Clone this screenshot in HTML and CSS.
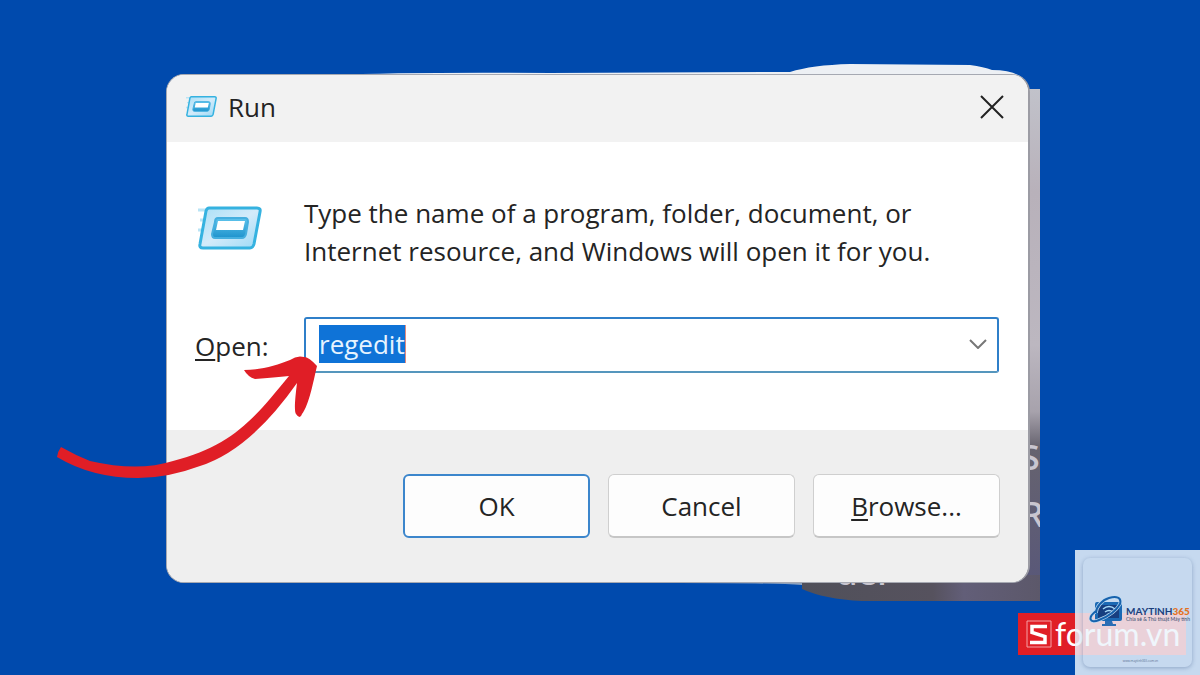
FILE: index.html
```html
<!DOCTYPE html>
<html lang="en">
<head>
<meta charset="utf-8">
<meta name="viewport" content="width=device-width, initial-scale=1">
<title>Run</title>
<link rel="stylesheet" href="styles.css">
</head>
<body>
<main class="desktop">
  <svg class="backdrop" viewBox="0 0 1200 675" aria-hidden="true">
    <defs>
      <linearGradient id="side" x1="0" y1="0" x2="0" y2="1">
        <stop offset="0" stop-color="#c1c2ca"/>
        <stop offset=".2" stop-color="#b8b1ba"/>
        <stop offset=".5" stop-color="#bcb7c0"/>
        <stop offset=".63" stop-color="#a7a2ac"/>
        <stop offset=".7" stop-color="#66636f"/>
        <stop offset="1" stop-color="#57567a"/>
      </linearGradient>
      <linearGradient id="base" x1="0" y1="0" x2="1" y2="0">
        <stop offset="0" stop-color="#50505a"/>
        <stop offset=".55" stop-color="#56525e"/>
        <stop offset=".68" stop-color="#625e78"/>
        <stop offset="1" stop-color="#5c586a"/>
      </linearGradient>
      <clipPath id="strip"><path d="M1020 89h20v512H862q-38-2-60-12v-9h218z"/></clipPath>
    </defs>
    <path d="M330 75q80-3 220-2l240-1q22-7 60-8l120 1q14 2 22 5 26 0 34 12v10z" fill="#edf0f4"/>
    <path d="M1020 89h20v512h-20z" fill="url(#side)"/>
    <path d="M802 575h238v26H862q-38-2-60-12z" fill="url(#base)"/>
    <path d="M680 580h122v5q-30-2-122-2z" fill="#8ea2bd"/>
    <g clip-path="url(#strip)" class="backdrop-text">
      <text x="1021" y="470">S</text>
      <text x="1022" y="527">R</text>
      <text x="836" y="585">uer</text>
    </g>
  </svg>

  <form class="dialog" aria-labelledby="title">
    <header class="titlebar">
      <svg class="icon-small" viewBox="0 0 66 46" aria-hidden="true"><use href="#run"/></svg>
      <h1 class="title" id="title">Run</h1>
      <button class="close" type="button" aria-label="Close">
        <svg viewBox="0 0 24 24" aria-hidden="true"><path d="M1 1l22 22M23 1L1 23"/></svg>
      </button>
    </header>
    <div class="content">
      <svg class="icon-large" viewBox="0 0 66 46" aria-hidden="true">
        <defs>
          <linearGradient id="plate" x1="0" y1="0" x2="1" y2="1">
            <stop offset="0" stop-color="#a9dff6"/><stop offset=".5" stop-color="#d3ebfa"/><stop offset="1" stop-color="#9bd9f6"/>
          </linearGradient>
          <linearGradient id="bar" x1="0" y1="0" x2="0" y2="1">
            <stop offset="0" stop-color="#5fc4ec"/><stop offset="1" stop-color="#1e93cd"/>
          </linearGradient>
        </defs>
        <g id="run">
          <path d="M0 5h11M2 15h7M0 25h6M2 34h4" stroke="#b9e4f5" stroke-width="3"/>
          <path d="M11 3h48q4 0 3 4l-6 32q-1 4-4 4H5q-4 0-3-4L8 6q1-3 3-3z" fill="url(#plate)" stroke="#35b2e0" stroke-width="3"/>
          <path d="M20 13h27q3 0 3 4l-2 12q-1 4-4 4H17q-3 0-3-4l3-12q0-4 3-4z" fill="url(#bar)" stroke="#45afdf" stroke-width="2"/>
          <path d="M20 16h27l-2 9H18z" fill="#fff"/>
        </g>
      </svg>
      <p class="message">Type the name of a program, folder, document, or<br>Internet resource, and Windows will open it for you.</p>
      <label class="label" for="command"><u>O</u>pen:</label>
      <div class="combo">
        <input class="command" id="command" type="text" value="regedit" autocomplete="off">
        <button class="drop" type="button" aria-label="Show recent commands">
          <svg viewBox="0 0 18 10" aria-hidden="true"><path d="M1 1l8 8 8-8"/></svg>
        </button>
      </div>
    </div>
    <footer class="actions">
      <button class="button button-default" type="submit">OK</button>
      <button class="button" type="button">Cancel</button>
      <button class="button" type="button"><span><u>B</u>rowse...</span></button>
    </footer>
  </form>

  <svg class="arrow" viewBox="0 0 264 126" aria-hidden="true">
    <path d="M5 93Q2 97 1 103 36 124 82 124 112 124 144 112 194 96 241 29C239 45 238 57 240 60Q244 66 246 60C253 51 257 29 261 12Q253 3 248 3Q241 1 234 6C221 11 206 16 188 16Q192 23 199 25C212 24 223 23 233 22C197 66 176 92 117 107Q82 118 34 107 19 101 5 93z"/>
  </svg>

  <div class="sforum">
    <svg class="sforum-mark" viewBox="0 0 26 28" aria-hidden="true">
      <path d="M1 1h24v26H1z" fill="none" stroke="#f5a0a5"/>
      <path d="M21 6.500H6v6l13 4v6H4" fill="none" stroke="#fff" stroke-width="3.500"/>
    </svg>
    <span>forum.vn</span>
  </div>

  <aside class="stamp">
    <div class="stamp-card">
      <div class="brand">
        <svg class="brand-mark" viewBox="0 0 36 34" aria-hidden="true">
          <path d="M8 7h23q2 0 2 2v15q0 2-2 2H8q-2 0-2-2V9q0-2 2-2z" fill="#1b69b4"/>
          <path d="M9 10h21v13H9z" fill="#173f80"/>
          <path d="M16 26h7l1 3h3v2H13v-2h3z" fill="#2a6db5"/>
          <path d="M14 14q6-5 12 0M16 17q4-3 8 0M18 20q2-2 4 0" fill="none" stroke="#a8dbf8" stroke-width="1.500"/>
          <path d="M7 16C-2 23 1 29 10 25 18 22 27 16 31 9 33 2 27 1 20 3 13 5 7 12 7 18" fill="none" stroke="#bcd9f1" stroke-width="3.500"/>
          <path d="M7 16C-2 23 1 29 10 25 18 22 27 16 31 9 33 2 27 1 20 3 13 5 7 12 7 18" fill="none" stroke="#1762ad" stroke-width="2"/>
        </svg>
        <div>
          <div class="brand-name">MAYTINH<b>365</b></div>
          <div class="brand-tag">Chia sẻ &amp; Thủ thuật Máy tính</div>
        </div>
      </div>
      <div class="brand-url">www.maytinh365.com.vn</div>
    </div>
  </aside>
</main>
</body>
</html>
```
FILE: styles.css
```css
* { box-sizing: border-box; }
body {
  margin: 0;
  background: #004aad;
  color: #242424;
  font: 26px/38px "Open Sans", "Noto Sans", sans-serif;
}
.desktop {
  position: relative;
  min-height: 100vh;
  padding: 74px 170px 92px 166px;
  overflow: hidden;
}
.backdrop {
  position: absolute;
  top: 0;
  left: 0;
  width: 100%;
}
.backdrop-text {
  fill: #c9c6d0;
  font-size: 34px;
  font-weight: 600;
}
.dialog {
  position: relative;
  border: 1px solid #a6a9b2;
  border-right: 2px solid #9c9ca4;
  border-radius: 18px;
  background: #fff;
  overflow: hidden;
}
.titlebar {
  display: flex;
  align-items: center;
  height: 67px;
  padding: 0 24px 4px 19px;
  background: #f2f2f2;
}
.icon-small { width: 32px; height: 23px; }
.title {
  flex: 1;
  margin: 0 0 0 10px;
  font-size: 26px;
  font-weight: 400;
}
.close, .drop {
  display: flex;
  padding: 0;
  border: 0;
  background: none;
}
.close svg { width: 24px; height: 24px; }
.close path, .drop path { fill: none; stroke: #222; stroke-width: 2; }
.content {
  display: grid;
  grid-template-columns: 109px 1fr;
  row-gap: 47px;
  align-items: center;
  height: 288px;
  align-content: start;
  padding: 52px 29px 0 28px;
}
.icon-large { width: 66px; height: 46px; margin-left: 3px; margin-bottom: 8px; }
.message { margin: 0; }
.label { padding-top: 2px; }
u { text-decoration-thickness: 2px; text-underline-offset: 3px; }
.combo {
  display: flex;
  align-items: center;
  justify-content: space-between;
  height: 56px;
  padding: 0 10px 2px 13px;
  border: 2px solid #2f7fc9;
  border-bottom-color: #5596bd;
  border-radius: 3px;
}
.command {
  width: 87px;
  height: 38px;
  padding: 0;
  border: 0;
  border-right: 1px solid #e08a80;
  background: #0f73d7;
  color: #e6f3ff;
  font: inherit;
  outline: 0;
}
.drop svg { width: 18px; height: 10px; }
.drop path { stroke: #777; }
.actions {
  display: flex;
  justify-content: flex-end;
  gap: 18px;
  padding: 44px 28px;
  background: #efefef;
}
.button {
  width: 187px;
  height: 64px;
  padding: 0;
  border: 1px solid #cfcfcf;
  border-bottom: 2px solid #c6c6c6;
  border-radius: 6px;
  background: #fdfdfd;
  color: inherit;
  font: inherit;
}
.button-default { border: 2px solid #3c86cc; }
.arrow {
  position: absolute;
  top: 354px;
  left: 56px;
  width: 264px;
  fill: #e01e26;
}
.sforum {
  position: absolute;
  right: 14px;
  bottom: 20px;
  display: flex;
  align-items: center;
  gap: 3px;
  width: 168px;
  height: 42px;
  padding: 0 0 0 8px;
  background: #e01e26;
  color: #fff;
  font: 400 32px/40px Lato, sans-serif;
}
.sforum-mark { width: 26px; height: 28px; }
.stamp {
  position: absolute;
  right: 0;
  bottom: 0;
  width: 125px;
  height: 125px;
  padding: 8px;
  background: rgba(236, 244, 252, .84);
}
.stamp-card {
  display: flex;
  flex-direction: column;
  justify-content: space-between;
  height: 109px;
  padding: 37px 0 3px 6px;
  border-radius: 7px;
  box-shadow: 0 1px 4px rgba(60, 90, 140, .4);
}
.brand { display: flex; align-items: center; gap: 1px; }
.brand-mark { flex: none; width: 36px; height: 34px; }
.brand-name {
  margin-top: 3px;
  color: #1c3f7c;
  font: 700 10px/10px Lato, sans-serif;
}
.brand-name b { color: #e37222; }
.brand-tag {
  color: #33496e;
  font: 5px/6px Lato, sans-serif;
  white-space: nowrap;
}
.brand-url {
  color: #5a6f90;
  font: 3px/6px "Open Sans", sans-serif;
  text-align: center;
}
```
